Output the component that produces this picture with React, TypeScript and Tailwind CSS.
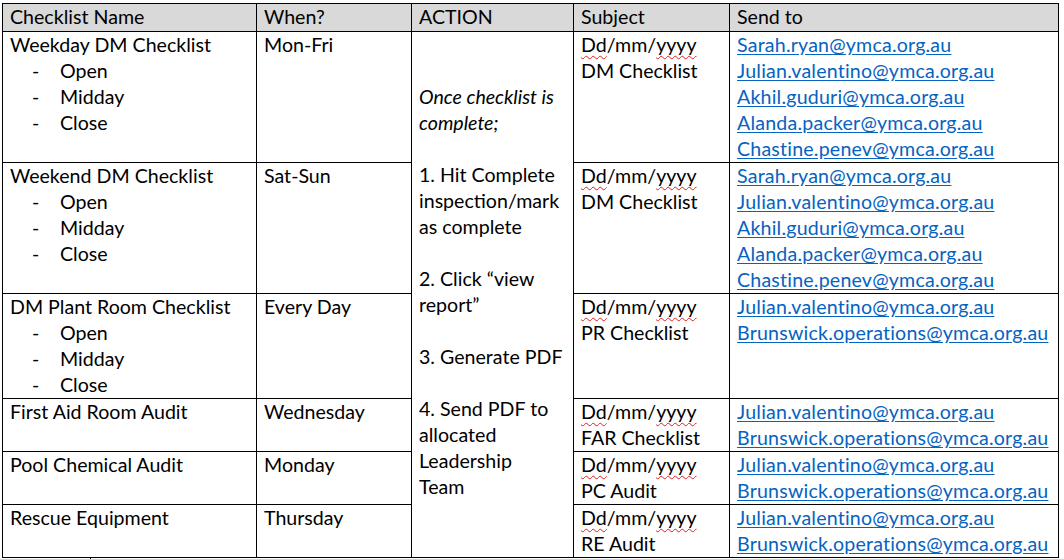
import React from "react";

const Sq = ({ children }: { children: React.ReactNode }) => (
  <span className="underline decoration-wavy decoration-[#e02020] decoration-1 underline-offset-[3px]">{children}</span>
);

const Subj = ({ second }: { second: string }) => (
  <div>
    <div>
      <Sq>Dd</Sq>/mm/<Sq>yyyy</Sq>
    </div>
    <div>{second}</div>
  </div>
);

const Mail = ({ children }: { children: React.ReactNode }) => (
  <div>
    <span className="text-[#0563c1] underline underline-offset-[2px] tracking-[0.2px]">{children}</span>
  </div>
);

const Name = ({ title, items }: { title: string; items?: string[] }) => (
  <div>
    <div>{title}</div>
    {items?.map((it) => (
      <div key={it} className="flex">
        <span className="w-[50px] pl-[22px] shrink-0">-</span>
        <span>{it}</span>
      </div>
    ))}
  </div>
);

const td = "border border-black align-top pl-[7px] pr-[2px] py-0";

export default function App() {
  return (
    <div
      className="bg-white w-[1064px] h-[559px] overflow-hidden pt-[3px] pl-[2px] text-[19.6px] leading-[26px] text-black"
      style={{ fontFamily: "Lato, 'Liberation Sans', sans-serif" }}
    >
      <table className="table-fixed border-collapse w-[1056px]">
        <colgroup>
          <col className="w-[254px]" />
          <col className="w-[155px]" />
          <col className="w-[162px]" />
          <col className="w-[156px]" />
          <col className="w-[329px]" />
        </colgroup>
        <tbody>
          <tr className="h-[28px] bg-[#d9d9d9]">
            <td className={td}>Checklist Name</td>
            <td className={td}>When?</td>
            <td className={td}>ACTION</td>
            <td className={td}>Subject</td>
            <td className={td}>Send to</td>
          </tr>
          <tr className="h-[129px]">
            <td className={td}>
              <Name title="Weekday DM Checklist" items={["Open", "Midday", "Close"]} />
            </td>
            <td className={td}>Mon-Fri</td>
            <td rowSpan={6} className="border border-black align-middle pl-[7px] pr-0 pb-[5px]">
              <div className="italic">Once checklist is</div>
              <div className="italic">complete;</div>
              <div>&nbsp;</div>
              <div>1. Hit Complete</div>
              <div>inspection/mark</div>
              <div>as complete</div>
              <div>&nbsp;</div>
              <div>2. Click “view</div>
              <div>report”</div>
              <div>&nbsp;</div>
              <div>3. Generate PDF</div>
              <div>&nbsp;</div>
              <div>4. Send PDF to</div>
              <div>allocated</div>
              <div>Leadership</div>
              <div>Team</div>
            </td>
            <td className={td}>
              <Subj second="DM Checklist" />
            </td>
            <td className={td}>
              <Mail>Sarah.ryan@ymca.org.au</Mail>
              <Mail>Julian.valentino@ymca.org.au</Mail>
              <Mail>Akhil.guduri@ymca.org.au</Mail>
              <Mail>Alanda.packer@ymca.org.au</Mail>
              <Mail>Chastine.penev@ymca.org.au</Mail>
            </td>
          </tr>
          <tr className="h-[129px]">
            <td className={td}>
              <Name title="Weekend DM Checklist" items={["Open", "Midday", "Close"]} />
            </td>
            <td className={td}>Sat-Sun</td>
            <td className={td}>
              <Subj second="DM Checklist" />
            </td>
            <td className={td}>
              <Mail>Sarah.ryan@ymca.org.au</Mail>
              <Mail>Julian.valentino@ymca.org.au</Mail>
              <Mail>Akhil.guduri@ymca.org.au</Mail>
              <Mail>Alanda.packer@ymca.org.au</Mail>
              <Mail>Chastine.penev@ymca.org.au</Mail>
            </td>
          </tr>
          <tr className="h-[104px]">
            <td className={td}>
              <Name title="DM Plant Room Checklist" items={["Open", "Midday", "Close"]} />
            </td>
            <td className={td}>Every Day</td>
            <td className={td}>
              <Subj second="PR Checklist" />
            </td>
            <td className={td}>
              <Mail>Julian.valentino@ymca.org.au</Mail>
              <Mail>Brunswick.operations@ymca.org.au</Mail>
            </td>
          </tr>
          <tr className="h-[52px]">
            <td className={td}>First Aid Room Audit</td>
            <td className={td}>Wednesday</td>
            <td className={td}>
              <Subj second="FAR Checklist" />
            </td>
            <td className={td}>
              <Mail>Julian.valentino@ymca.org.au</Mail>
              <Mail>Brunswick.operations@ymca.org.au</Mail>
            </td>
          </tr>
          <tr className="h-[52px]">
            <td className={td}>Pool Chemical Audit</td>
            <td className={td}>Monday</td>
            <td className={td}>
              <Subj second="PC Audit" />
            </td>
            <td className={td}>
              <Mail>Julian.valentino@ymca.org.au</Mail>
              <Mail>Brunswick.operations@ymca.org.au</Mail>
            </td>
          </tr>
          <tr className="h-[52px]">
            <td className={td}>Rescue Equipment</td>
            <td className={td}>Thursday</td>
            <td className={td}>
              <Subj second="RE Audit" />
            </td>
            <td className={td}>
              <Mail>Julian.valentino@ymca.org.au</Mail>
              <Mail>Brunswick.operations@ymca.org.au</Mail>
            </td>
          </tr>
        </tbody>
      </table>
      <div className="ml-[88px] w-px h-[4px] bg-black" />
    </div>
  );
}
